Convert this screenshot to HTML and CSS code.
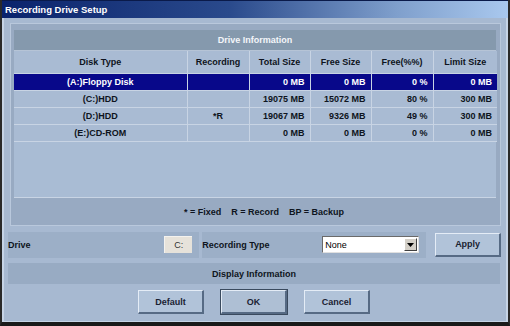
FILE: index.html
```html
<!DOCTYPE html>
<html>
<head>
<meta charset="utf-8">
<link rel="stylesheet" href="styles.css">
</head>
<body>
<div class="window">
  <div class="titlebar">Recording Drive Setup</div>
  <div class="client">
    <div class="group">
      <div class="group-title">Drive Information</div>
      <div class="table-wrap">
        <table class="grid">
          <colgroup>
            <col class="c1"><col class="c2"><col class="c3"><col class="c4"><col class="c5"><col class="c6">
          </colgroup>
          <thead>
            <tr><th>Disk Type</th><th>Recording</th><th>Total Size</th><th>Free Size</th><th>Free(%%)</th><th>Limit Size</th></tr>
          </thead>
          <tbody>
            <tr class="sel"><td class="ctr">(A:)Floppy Disk</td><td class="ctr"></td><td class="num">0 MB</td><td class="num">0 MB</td><td class="num">0 %</td><td class="num">0 MB</td></tr>
            <tr><td class="ctr">(C:)HDD</td><td class="ctr"></td><td class="num">19075 MB</td><td class="num">15072 MB</td><td class="num">80 %</td><td class="num">300 MB</td></tr>
            <tr><td class="ctr">(D:)HDD</td><td class="ctr">*R</td><td class="num">19067 MB</td><td class="num">9326 MB</td><td class="num">49 %</td><td class="num">300 MB</td></tr>
            <tr><td class="ctr">(E:)CD-ROM</td><td class="ctr"></td><td class="num">0 MB</td><td class="num">0 MB</td><td class="num">0 %</td><td class="num">0 MB</td></tr>
          </tbody>
        </table>
      </div>
      <div class="legend"><span>* = Fixed</span><span>R = Record</span><span>BP = Backup</span></div>
    </div>
    <div class="controls">
      <div class="field drive"><span>Drive</span><span class="drive-box">C:</span></div>
      <div class="field rectype"><span>Recording Type</span>
        <div class="combo"><span class="combo-text">None</span><span class="combo-btn"><svg width="7" height="4" viewBox="0 0 7 4"><path d="M0 0h7L3.5 4z" fill="#000"/></svg></span></div>
      </div>
      <div class="btn apply">Apply</div>
    </div>
    <div class="bar">Display Information</div>
    <div class="buttons">
      <div class="btn">Default</div>
      <div class="btn default">OK</div>
      <div class="btn">Cancel</div>
    </div>
  </div>
</div>
</body>
</html>
```
FILE: styles.css
```css
* { box-sizing: border-box; }
html, body { margin: 0; padding: 0; }
body {
  width: 510px; height: 326px; overflow: hidden;
  font-family: "Liberation Sans", Arial, sans-serif;
  font-weight: bold; font-size: 9px; color: #0e1420;
  background: #a7b9d1;
}
.window {
  width: 510px; height: 326px;
  border-left: 2px solid #2a2a2a;
  border-right: 2px solid #2a2a2a;
  border-bottom: 4px solid #1a1a1a;
  background: #a7b9d1;
  display: flex; flex-direction: column;
}
.titlebar {
  height: 18px; line-height: 17px; padding-left: 3px;
  color: #fff; font-size: 9.5px;
  background: linear-gradient(to right, #0a236c 0%, #2a4a8c 45%, #7f9fcc 78%, #a9c8ee 100%);
  border-top: 1px solid #0a1a4a;
}
.client {
  flex: 1;
  border-left: 2px solid #c6d4e6;
  border-right: 2px solid #c6d4e6;
  border-bottom: 1px solid #c6d4e6;
  padding: 5px 5px 0 4px;
}
.group {
  height: 203px;
  margin: 0 0 0 2px;
  background: #98aac2;
  border: 1px solid #b9c8dc;
  padding: 6px 4px 0 3px;
  display: flex; flex-direction: column;
}
.group-title {
  height: 21px; line-height: 20px; text-align: center; color: #f4f6fa;
  background: #8599ad;
  border-bottom: 1px solid #b6c4d6;
}
.table-wrap {
  height: 147px;
  background: #a9bcd4;
  border-bottom: 1px solid #c8d4e4;
}
.grid { border-collapse: collapse; width: 483px; table-layout: fixed; }
.c1 { width: 173px; } .c2 { width: 62px; } .c3 { width: 61px; } .c4 { width: 61px; } .c5 { width: 62px; } .c6 { width: 64px; }
.grid th, .grid td {
  border: 1px solid #c8d4e4; padding: 0 5px; white-space: nowrap;
  background: #a9bbd3; color: #0e1420;
}
.grid th { height: 22px; text-align: center; border-top: 0; }
.grid td { height: 17px; }
.grid th:first-child, .grid td:first-child { border-left: 0; }
.grid th:last-child, .grid td:last-child { border-right: 0; }
.ctr { text-align: center; }
.num { text-align: right; }
.grid tr.sel td { background: #08088a; color: #fff; border-color: #c8d4e4; }
.legend {
  flex: 1; display: flex; justify-content: center; align-items: center; gap: 10px;
  padding-left: 18px;
}
.controls {
  display: flex; align-items: center; margin-top: 5px; height: 27px;
}
.field {
  height: 26px; background: #9cafc7; display: flex; align-items: center;
  padding: 0 0 0 0;
}
.drive { width: 192px; justify-content: space-between; padding-right: 7px; }
.drive-box {
  width: 28px; height: 17px; background: #e6e2da; color: #333; font-weight: normal;
  display: flex; align-items: center; justify-content: center;
  border-top: 1px solid #f4f2ee; border-left: 1px solid #f4f2ee;
}
.rectype { width: 225px; margin-left: 3px; padding-left: 0; }
.rectype > span { width: 120px; }
.combo {
  width: 97px; height: 17px; background: #fff; display: flex; align-items: center;
  border: 1px solid #6a6a6a; border-right-color: #e0e0e0; border-bottom-color: #e0e0e0;
}
.combo-text { flex: 1; font-weight: normal; padding-left: 2px; color: #000; }
.combo-btn {
  width: 13px; height: 13px; margin-right: 1px; background: #d4d0c8;
  display: flex; align-items: center; justify-content: center;
  border: 1px solid #fff; border-right-color: #404040; border-bottom-color: #404040;
}
.btn {
  width: 66px; height: 24px; display: flex; align-items: center; justify-content: center;
  background: #b1c3d9; color: #1a2232;
  border: 1px solid #e4ecf6; border-right: 2px solid #566a84; border-bottom: 2px solid #566a84;
}
.apply { margin-left: 9px; }
.bar {
  height: 21px; margin: 5px 0 0 0; width: 492px; background: #98abc3;
  display: flex; align-items: center; justify-content: center;
}
.buttons {
  display: flex; justify-content: center; gap: 17px; margin-top: 6px; padding-right: 1px;
}
.btn.default { outline: 1px solid #3a4a5e; outline-offset: 0; background: #aebfd4; }
```
